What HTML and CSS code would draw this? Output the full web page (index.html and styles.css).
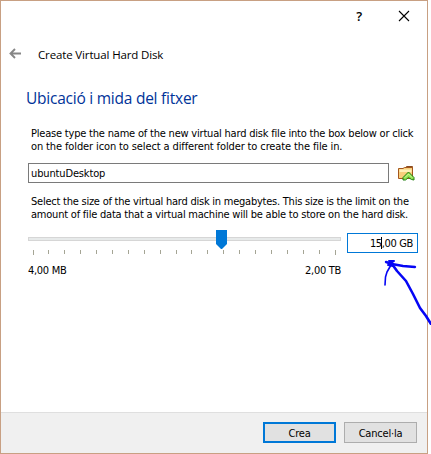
FILE: index.html
```html
<!DOCTYPE html>
<html lang="ca">
<head>
<meta charset="utf-8">
<title>Create Virtual Hard Disk</title>
<link rel="stylesheet" href="styles.css">
</head>
<body>
<main class="window">
  <div class="titlebar">
    <span class="help">?</span>
    <svg class="close" width="10" height="10" viewBox="0 0 10 10"><path d="M0 0L10 10M10 0L0 10" stroke="#000" stroke-width="1.1"/></svg>
  </div>
  <header class="wizard-head">
    <svg class="back" width="13" height="11" viewBox="0 0 13 11"><path d="M12 5.5H1.5M6 1L1.5 5.5L6 10" fill="none" stroke="#868686" stroke-width="1.9"/></svg>
    <span class="wizard-name">Create Virtual Hard Disk</span>
  </header>
  <section class="content">
    <h1><span>Ubicació i mida del fitxer</span></h1>
    <div class="para"><span class="l1">Please type the name of the new virtual hard disk file into the box below or click</span><br><span class="l2">on the folder icon to select a different folder to create the file in.</span></div>
    <div class="file-row">
      <div class="field"><span>ubuntuDesktop</span></div>
      <svg class="folder" width="17" height="16" viewBox="0 0 17 16">
        <path d="M8.500 3V1.500H14.500V4" fill="#f7dfa0" stroke="#8a4b20"/>
        <path d="M.5 13.500V3.500H5L6.500 2.500H14.500V13.500Z" fill="#f8cf7c" stroke="#a4561d"/>
        <path d="M1.500 7V4.500H13.500V7Z" fill="#fff0b8"/>
        <path d="M5 12.500L10.500 7L16 12.500V15L13.500 14.500L10.500 12.500L7.500 15H5Z" fill="#8fe04f" stroke="#238012"/>
        <path d="M7 12.500L10.500 9L14 12.500" fill="none" stroke="#d4ff9d"/>
      </svg>
    </div>
    <div class="para second"><span class="l3">Select the size of the virtual hard disk in megabytes. This size is the limit on the</span><br><span class="l4">amount of file data that a virtual machine will be able to store on the hard disk.</span></div>
    <div class="size-row">
      <div class="slider">
        <svg width="313" height="27" viewBox="0 0 313 27" shape-rendering="crispEdges">
          <path d="M.5 7.500H312.500V10.500H.5Z" fill="#e7eaea" stroke="#d6d6d6"/>
          <path d="M5.500 20v5M307.500 20v5M20.500 20v4M36.500 20v4M52.500 20v4M68.500 20v4M84.500 20v4M100.500 20v4M116.500 20v4M132.500 20v4M148.500 20v4M163.500 20v4M179.500 20v4M195.500 20v4M211.500 20v4M227.500 20v4M243.500 20v4M259.500 20v4M275.500 20v4M291.500 20v4" stroke="#a5a595"/>
          <path d="M188 0H199V14L194 19H193L188 14Z" fill="#0078d7" shape-rendering="auto"/>
        </svg>
        <div class="limits"><span class="min">4,00 MB</span><span class="max">2,00 TB</span></div>
      </div>
      <div class="value"><span>15<i class="caret"></i>,00 GB</span></div>
    </div>
  </section>
  <footer>
    <button class="primary"><span>Crea</span></button>
    <button><span>Cancel·la</span></button>
  </footer>
</main>
<svg class="ink" width="47" height="68" viewBox="0 0 47 68" fill="none" stroke="#0606f5" stroke-linecap="round" stroke-linejoin="round">
  <path d="M2 5L8 7L19 9L31 10" stroke-width="2.400"/>
  <path d="M5 4L10 4L4 8L9 9L6 5" stroke-width="2"/>
  <path d="M7 8L3 15L1.500 20L1 28" stroke-width="1.600"/>
  <path d="M8 7L13 14L22 24L29 37L36 51L42 59L47 67" stroke-width="2.600"/>
</svg>
</body>
</html>
```

FILE: styles.css
```css
* { box-sizing: border-box; }
html, body { margin: 0; width: 431px; height: 454px; overflow: hidden; background: #fff; }
body { position: relative; font: 11px/13px "DejaVu Sans Condensed", "DejaVu Sans", sans-serif; font-stretch: condensed; letter-spacing: -0.14px; color: #000; }
.window { width: 428px; height: 454px; border: 1px solid #c8a083; display: flex; flex-direction: column; background: #fff; }
.titlebar { height: 29px; display: flex; justify-content: flex-end; align-items: center; padding-right: 18px; }
.help { font: 600 13px/16px "Open Sans", sans-serif; margin-right: 37px; }
.close { overflow: visible; }
.wizard-head { height: 46px; display: flex; align-items: center; padding-left: 8px; }
.back { margin-right: 16px; }
.wizard-name { font: 11.5px/18px "Open Sans", sans-serif; letter-spacing: -0.14px; padding-top: 3px; white-space: nowrap; }
.content { flex: 1; padding: 8px 9px 0 27px; }
h1 { margin: 0 0 0 -2px; font: 15.5px/28px "Open Sans", sans-serif; letter-spacing: -0.24px; color: #003399; white-space: nowrap; }
.para { margin: 14px 0 0 3px; white-space: nowrap; padding-top: 1px; }
.l1 { letter-spacing: -0.2px; }
.l2 { letter-spacing: -0.12px; }
.l3 { letter-spacing: -0.235px; }
.l4 { letter-spacing: -0.215px; }
.file-row { display: flex; align-items: center; gap: 9px; margin-top: 10px; height: 20px; }
.field { width: 361px; height: 20px; border: 1px solid #7a7a7a; padding: 3px 2px; }
.second { margin-top: 11px; }
.size-row { display: flex; justify-content: space-between; margin-top: 9px; }
.slider { width: 313px; }
.slider svg { display: block; }
.limits { display: flex; justify-content: space-between; margin-top: 7px; letter-spacing: -0.3px; }
.value { width: 71px; height: 20px; margin-top: 3px; border: 1px solid #0078d7; padding: 3px 4px; text-align: right; white-space: nowrap; letter-spacing: -0.35px; }
.caret { display: inline-block; width: 1px; height: 12px; margin: -2px 0 0 -1px; background: #000; vertical-align: -2px; }
footer { height: 41px; border-top: 1px solid #dfdfdf; background: #f0f0f0; display: flex; justify-content: flex-end; gap: 8px; padding: 9px 10px 0 0; }
button { width: 73px; height: 21px; border: 1px solid #adadad; background: #e1e1e1; color: #000; font: inherit; letter-spacing: -0.2px; padding: 2px 0 0; }
.primary { border: 2px solid #0078d7; }
.ink { position: absolute; left: 384px; top: 257px; }
```
